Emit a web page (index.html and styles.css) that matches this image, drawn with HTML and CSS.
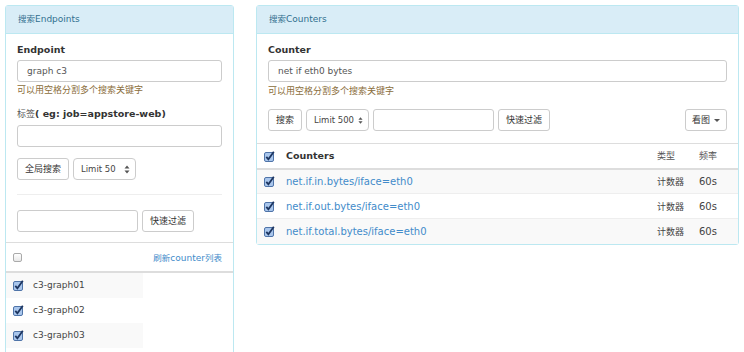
FILE: index.html
```html
<!DOCTYPE html>
<html lang="zh-CN">
<head>
    <meta charset="UTF-8">
    <title>Dashboard</title>
    <link rel="stylesheet" href="styles.css">
</head>
<body>
    <div class="panel panel-left">
        <div class="panel-heading"><span class="cn">搜索</span>Endpoints</div>
        <div class="panel-body">
            <div class="label">Endpoint</div>
            <div class="input">graph c3</div>
            <div class="help cn">可以用空格分割多个搜索关键字</div>
            <div class="label label-2"><span class="cn light">标签</span>( eg: job=appstore-web)</div>
            <div class="input"></div>
            <div class="controls">
                <div class="btn cn">全局搜索</div>
                <div class="select select-50">Limit 50
                    <svg width="6" height="9" viewBox="0 0 6 9"><path d="M3 0.5 L5.5 3.5 H0.5 Z M3 8.5 L5.5 5.5 H0.5 Z" fill="#555"/></svg>
                </div>
            </div>
            <div class="hr"></div>
            <div class="controls">
                <div class="input input-filter"></div>
                <div class="btn cn">快速过滤</div>
            </div>
        </div>
        <div class="list-head">
            <span class="cb cb-off"></span>
            <a class="link" href="#"><span class="cn">刷新</span>counter<span class="cn">列表</span></a>
        </div>
        <table class="list">
            <tr><td><span class="cb"><svg width="11" height="11" viewBox="0 0 11 11"><rect x="0.5" y="1.5" width="9" height="9" rx="1.5" fill="#a9c6ec" stroke="#4f74a8"/><path d="M2.3 5.8 L4.4 8.3 L9.8 0.8" fill="none" stroke="#1d3560" stroke-width="1.8"/></svg></span>c3-graph01</td></tr>
            <tr><td><span class="cb"><svg width="11" height="11" viewBox="0 0 11 11"><rect x="0.5" y="1.5" width="9" height="9" rx="1.5" fill="#a9c6ec" stroke="#4f74a8"/><path d="M2.3 5.8 L4.4 8.3 L9.8 0.8" fill="none" stroke="#1d3560" stroke-width="1.8"/></svg></span>c3-graph02</td></tr>
            <tr><td><span class="cb"><svg width="11" height="11" viewBox="0 0 11 11"><rect x="0.5" y="1.5" width="9" height="9" rx="1.5" fill="#a9c6ec" stroke="#4f74a8"/><path d="M2.3 5.8 L4.4 8.3 L9.8 0.8" fill="none" stroke="#1d3560" stroke-width="1.8"/></svg></span>c3-graph03</td></tr>
        </table>
    </div>

    <div class="panel panel-right">
        <div class="panel-heading"><span class="cn">搜索</span>Counters</div>
        <div class="panel-body body-right">
            <div class="label">Counter</div>
            <div class="input">net if eth0 bytes</div>
            <div class="help help-right cn">可以用空格分割多个搜索关键字</div>
            <div class="controls controls-right">
                <div class="btn cn">搜索</div>
                <div class="select select-500">Limit 500
                    <svg width="6" height="9" viewBox="0 0 6 9"><path d="M3 0.5 L5.5 3.5 H0.5 Z M3 8.5 L5.5 5.5 H0.5 Z" fill="#555"/></svg>
                </div>
                <div class="input input-search"></div>
                <div class="btn cn">快速过滤</div>
                <div class="btn btn-chart"><span class="cn">看图</span><span class="caret"></span></div>
            </div>
        </div>
        <table class="counters">
            <colgroup>
                <col class="col-cb"><col class="col-name"><col class="col-type"><col class="col-step">
            </colgroup>
            <tr class="head">
                <th><span class="cb"><svg width="11" height="11" viewBox="0 0 11 11"><rect x="0.5" y="1.5" width="9" height="9" rx="1.5" fill="#a9c6ec" stroke="#4f74a8"/><path d="M2.3 5.8 L4.4 8.3 L9.8 0.8" fill="none" stroke="#1d3560" stroke-width="1.8"/></svg></span></th>
                <th>Counters</th>
                <th class="cn light">类型</th>
                <th class="cn light">频率</th>
            </tr>
            <tr>
                <td><span class="cb"><svg width="11" height="11" viewBox="0 0 11 11"><rect x="0.5" y="1.5" width="9" height="9" rx="1.5" fill="#a9c6ec" stroke="#4f74a8"/><path d="M2.3 5.8 L4.4 8.3 L9.8 0.8" fill="none" stroke="#1d3560" stroke-width="1.8"/></svg></span></td>
                <td><a class="link" href="#">net.if.in.bytes/iface=eth0</a></td>
                <td class="cn">计数器</td>
                <td>60s</td>
            </tr>
            <tr>
                <td><span class="cb"><svg width="11" height="11" viewBox="0 0 11 11"><rect x="0.5" y="1.5" width="9" height="9" rx="1.5" fill="#a9c6ec" stroke="#4f74a8"/><path d="M2.3 5.8 L4.4 8.3 L9.8 0.8" fill="none" stroke="#1d3560" stroke-width="1.8"/></svg></span></td>
                <td><a class="link" href="#">net.if.out.bytes/iface=eth0</a></td>
                <td class="cn">计数器</td>
                <td>60s</td>
            </tr>
            <tr>
                <td><span class="cb"><svg width="11" height="11" viewBox="0 0 11 11"><rect x="0.5" y="1.5" width="9" height="9" rx="1.5" fill="#a9c6ec" stroke="#4f74a8"/><path d="M2.3 5.8 L4.4 8.3 L9.8 0.8" fill="none" stroke="#1d3560" stroke-width="1.8"/></svg></span></td>
                <td><a class="link" href="#">net.if.total.bytes/iface=eth0</a></td>
                <td class="cn">计数器</td>
                <td>60s</td>
            </tr>
        </table>
    </div>
</body>
</html>
```

FILE: styles.css
```css
body {
    margin: 0;
    padding: 5px;
    display: flex;
    align-items: flex-start;
    gap: 22px;
    font-family: "DejaVu Sans", "Noto Sans CJK SC", sans-serif;
    font-size: 10px;
    color: #333;
    background: #fff;
    overflow: hidden;
}
.cn {
    font-size: 9px;
}
.light {
    font-weight: normal;
    color: #555;
}
.panel {
    box-sizing: border-box;
    border: 1px solid #bce8f1;
    border-radius: 3px;
    background: #fff;
}
.panel-left {
    width: 229px;
    min-height: 380px;
}
.panel-right {
    width: 483px;
}
.panel-heading {
    height: 27px;
    line-height: 27px;
    padding: 0 12px;
    background: #d9edf7;
    border-bottom: 1px solid #bce8f1;
    color: #31708f;
    font-size: 9px;
}
.panel-heading .cn {
    font-size: 8.5px;
}
.panel-body {
    padding: 10px 11px 10px;
}
.body-right {
    padding-bottom: 12px;
}
.label {
    font-weight: bold;
    font-size: 9.5px;
    line-height: 12px;
    margin-bottom: 4px;
}
.label-2 {
    margin-top: 12px;
    margin-bottom: 5px;
}
.input {
    box-sizing: border-box;
    height: 22px;
    line-height: 20px;
    padding: 0 9px;
    border: 1px solid #ccc;
    border-radius: 3px;
    color: #555;
    background: #fff;
    font-size: 9px;
}
.help {
    margin-top: 2px;
    line-height: 12px;
    color: #8a6d3b;
}
.help-right {
    margin-top: 3px;
}
.controls {
    display: flex;
    gap: 4px;
    margin-top: 11px;
}
.controls-right {
    margin-top: 12px;
}
.btn {
    box-sizing: border-box;
    height: 22px;
    line-height: 20px;
    padding: 0 7px;
    border: 1px solid #ccc;
    border-radius: 3px;
    background: #fff;
    color: #333;
    white-space: nowrap;
}
.select {
    box-sizing: border-box;
    height: 22px;
    padding: 0 5px 0 7px;
    border: 1px solid #ccc;
    border-radius: 4px;
    display: flex;
    align-items: center;
    justify-content: space-between;
    gap: 4px;
    color: #444;
    font-size: 8.5px;
    white-space: nowrap;
}
.select-50 {
    width: 63px;
}
.select-500 {
    width: 63px;
}
.input-filter {
    width: 121px;
}
.input-search {
    width: 121px;
}
.btn-chart {
    margin-left: auto;
    width: 42px;
    padding: 0 6px;
    display: flex;
    align-items: center;
    gap: 4px;
}
.caret {
    width: 0;
    height: 0;
    border-left: 3px solid transparent;
    border-right: 3px solid transparent;
    border-top: 3px solid #555;
}
.hr {
    height: 1px;
    background: #eee;
    margin: 14px 0 15px;
}
.list-head {
    height: 28px;
    border-top: 1px solid #ddd;
    border-bottom: 2px solid #ddd;
    padding: 0 11px 0 7px;
    display: flex;
    align-items: center;
    justify-content: space-between;
    font-size: 9px;
}
.list-head .cn {
    font-size: 8.5px;
}
.cb {
    display: inline-block;
    width: 11px;
    height: 11px;
    vertical-align: middle;
}
.cb svg {
    display: block;
}
.cb-off {
    box-sizing: border-box;
    width: 9px;
    height: 9px;
    border: 1px solid #aaa;
    border-radius: 2px;
    background: linear-gradient(#fff, #e8e8e8);
}
.link {
    color: #428bca;
    text-decoration: none;
}
.list {
    border-collapse: collapse;
    width: 137px;
}
.list td {
    height: 25px;
    padding: 0 7px;
    color: #444;
    font-size: 9px;
}
.list td .cb {
    margin-right: 9px;
}
.list tr:nth-child(odd) td {
    background: #f9f9f9;
}
.counters {
    width: 100%;
    border-collapse: collapse;
    table-layout: fixed;
}
.col-cb {
    width: 22px;
}
.col-type {
    width: 42px;
}
.col-step {
    width: 46px;
}
.counters th,
.counters td {
    padding: 0 7px;
    text-align: left;
    height: 25px;
    box-sizing: border-box;
    color: #444;
}
.counters th {
    font-weight: bold;
    font-size: 9.5px;
    color: #333;
    border-top: 1px solid #ddd;
    border-bottom: 2px solid #ddd;
}
.counters th.light {
    font-weight: normal;
    font-size: 9px;
    color: #555;
}
.counters tr:nth-child(even) td {
    background: #f9f9f9;
}
.counters td:first-child,
.counters th:first-child {
    padding-right: 0;
}
.counters tr td {
    border-top: 1px solid #eee;
}
```
